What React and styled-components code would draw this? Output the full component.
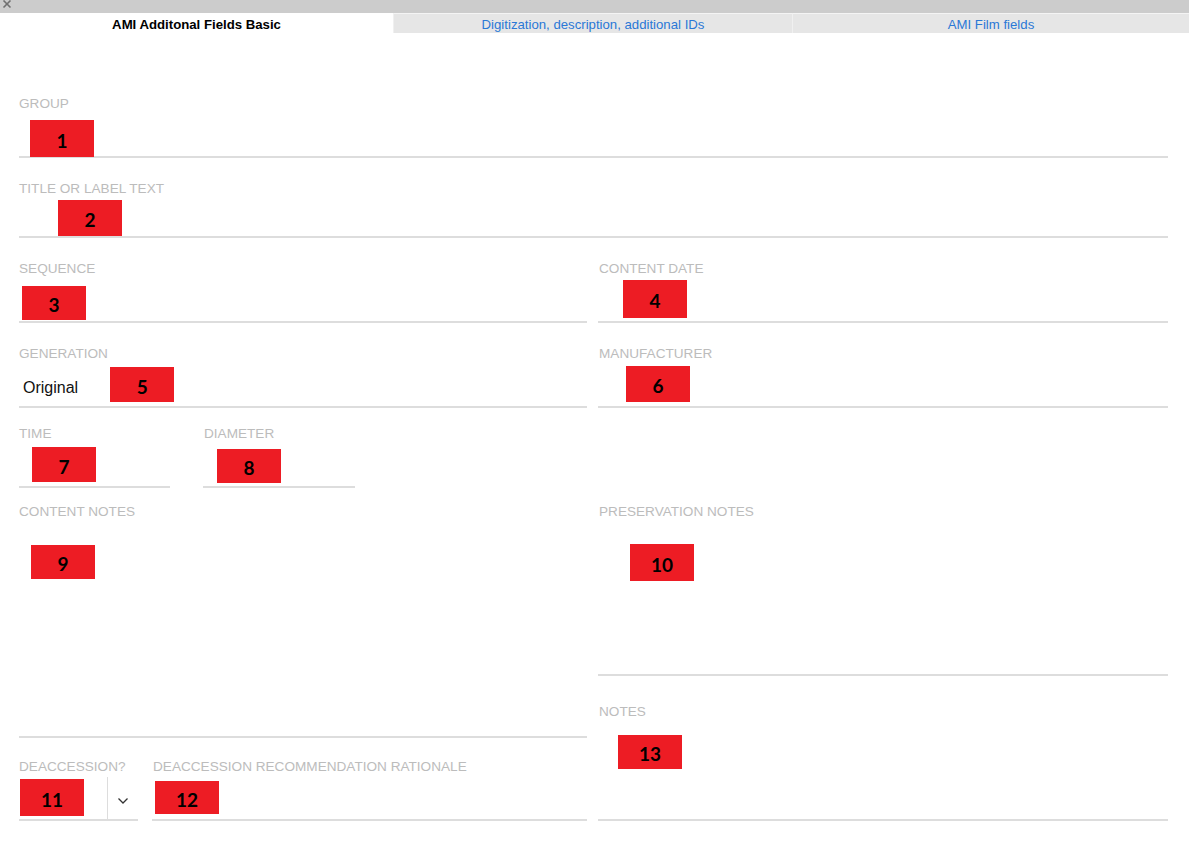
import React from "react";
import styled, { createGlobalStyle } from "styled-components";

const GlobalStyle = createGlobalStyle`
  html, body { margin: 0; padding: 0; background: #fff; }
  body { font-family: "Liberation Sans", Arial, sans-serif; }
`;

const App = () => {
    return (
        <>
            <GlobalStyle />
            <Page>
                <TopBar>
                    <Close aria-label="close">
                        <svg width="10" height="9" viewBox="0 0 10 9">
                            <path
                                d="M1.5 0.5 L8.5 7.5 M8.5 0.5 L1.5 7.5"
                                stroke="#707070"
                                strokeWidth="1.6"
                                fill="none"
                            />
                        </svg>
                    </Close>
                </TopBar>
                <Tabs>
                    <Tab $active $w="393px">AMI Additonal Fields Basic</Tab>
                    <Tab $w="399px">Digitization, description, additional IDs</Tab>
                    <Tab>AMI Film fields</Tab>
                </Tabs>
                <Form>
                    <Row $mt="63px">
                        <Field>
                            <Label>Group</Label>
                            <Box $h="45px">
                                <Badge $x="11px" $y="9px" $h="37px">1</Badge>
                            </Box>
                        </Field>
                    </Row>
                    <Row $mt="23px">
                        <Field>
                            <Label>Title or label text</Label>
                            <Box $h="40px">
                                <Badge $x="39px" $y="4px">2</Badge>
                            </Box>
                        </Field>
                    </Row>
                    <Row $mt="23px" $cols="568px 1fr">
                        <Field>
                            <Label>Sequence</Label>
                            <Box $h="45px">
                                <Badge $x="3px" $y="10px" $h="34px">3</Badge>
                            </Box>
                        </Field>
                        <Field>
                            <Label $indent="1px">Content date</Label>
                            <Box $h="45px">
                                <Badge $x="25px" $y="4px" $h="38px">4</Badge>
                            </Box>
                        </Field>
                    </Row>
                    <Row $mt="23px" $cols="568px 1fr">
                        <Field>
                            <Label>Generation</Label>
                            <Box $h="45px">
                                <Value>Original</Value>
                                <Badge $x="32px" $y="6px" $h="35px">5</Badge>
                            </Box>
                        </Field>
                        <Field>
                            <Label $indent="1px">Manufacturer</Label>
                            <Box $h="45px">
                                <Badge $x="28px" $y="5px">6</Badge>
                            </Box>
                        </Field>
                    </Row>
                    <Row $mt="18px" $cols="151px 152px" $gap="33px">
                        <Field>
                            <Label>Time</Label>
                            <Box $h="45px">
                                <Badge $x="13px" $y="6px" $h="35px">7</Badge>
                            </Box>
                        </Field>
                        <Field>
                            <Label $indent="1px">Diameter</Label>
                            <Box $h="45px">
                                <Badge $x="14px" $y="8px" $h="34px">8</Badge>
                            </Box>
                        </Field>
                    </Row>
                    <Row $mt="16px" $cols="568px 1fr">
                        <Column>
                            <Field>
                                <Label>Content notes</Label>
                                <Box $h="217px">
                                    <Badge $x="12px" $y="26px" $h="34px">9</Badge>
                                </Box>
                            </Field>
                            <Row $mt="21px" $cols="119px 1fr" $gap="14px">
                                <Field>
                                    <Label>Deaccession?</Label>
                                    <Box $h="45px">
                                        <Badge $x="1px" $y="5px" $h="37px">11</Badge>
                                        <SelectButton>
                                            <svg width="12" height="8" viewBox="0 0 12 8">
                                                <polyline
                                                    points="1.5,1.5 6,6 10.5,1.5"
                                                    fill="none"
                                                    stroke="#333"
                                                    strokeWidth="1.3"
                                                />
                                            </svg>
                                        </SelectButton>
                                    </Box>
                                </Field>
                                <Field>
                                    <Label $indent="1px">
                                        Deaccession recommendation rationale
                                    </Label>
                                    <Box $h="45px">
                                        <Badge $x="3px" $y="7px" $h="33px">12</Badge>
                                    </Box>
                                </Field>
                            </Row>
                        </Column>
                        <Column>
                            <Field>
                                <Label $indent="1px">Preservation notes</Label>
                                <Box $h="155px">
                                    <Badge $x="32px" $y="25px" $h="37px">10</Badge>
                                </Box>
                            </Field>
                            <Row $mt="28px">
                                <Field>
                                    <Label $indent="1px">Notes</Label>
                                    <Box $h="100px">
                                        <Badge $x="20px" $y="16px" $h="34px">13</Badge>
                                    </Box>
                                </Field>
                            </Row>
                        </Column>
                    </Row>
                </Form>
            </Page>
        </>
    );
};

const Page = styled.div`
    width: 1189px;
    min-height: 853px;
    background: #fff;
`;

const TopBar = styled.div`
    height: 13px;
    background: #cccccc;
    display: flex;
    align-items: flex-start;
`;

const Close = styled.span`
    display: flex;
    margin-left: 2px;
`;

const Tabs = styled.div`
    display: flex;
    height: 20px;
`;

const Tab = styled.div`
    flex: ${(p) => (p.$w ? `0 0 ${p.$w}` : "1")};
    box-sizing: border-box;
    display: flex;
    align-items: center;
    justify-content: center;
    padding-top: 2px;
    font-size: 13.2px;
    font-weight: ${(p) => (p.$active ? 700 : 400)};
    color: ${(p) => (p.$active ? "#000" : "#2a78d6")};
    background: ${(p) => (p.$active ? "#fff" : "#e6e6e6")};
    border-top: ${(p) => (p.$active ? "none" : "1px solid #f4f4f4")};
    border-left: ${(p) => (p.$active ? "none" : "1px solid #f0f0f0")};
`;

const Form = styled.div`
    padding: 0 21px 0 19px;
`;

const Row = styled.div`
    margin-top: ${(p) => p.$mt || "0"};
    display: grid;
    grid-template-columns: ${(p) => p.$cols || "1fr"};
    column-gap: ${(p) => p.$gap || "11px"};
    align-items: start;
`;

const Column = styled.div`
    display: flex;
    flex-direction: column;
`;

const Field = styled.div`
    display: flex;
    flex-direction: column;
`;

const Label = styled.div`
    height: 15px;
    line-height: 15px;
    padding-left: ${(p) => p.$indent || "0"};
    font-size: 13.6px;
    color: #bcbcbc;
    text-transform: uppercase;
    white-space: nowrap;
`;

const Box = styled.div`
    position: relative;
    height: ${(p) => p.$h};
    display: flex;
    align-items: flex-start;
    border-bottom: 2px solid #dddddd;
`;

const Value = styled.span`
    margin: 18px 0 0 4px;
    font-size: 16px;
    color: #111;
`;

const Badge = styled.div`
    margin-left: ${(p) => p.$x};
    margin-top: ${(p) => p.$y};
    width: 64px;
    height: ${(p) => p.$h || "36px"};
    background: #ed1c24;
    display: flex;
    align-items: center;
    justify-content: center;
    padding-top: 3px;
    box-sizing: border-box;
    font-family: Lato, "Open Sans", sans-serif;
    font-weight: 700;
    font-size: 19px;
    color: #000;
`;

const SelectButton = styled.div`
    margin-left: auto;
    align-self: stretch;
    width: 30px;
    margin-top: 3px;
    border-left: 1px solid #dddddd;
    display: flex;
    align-items: center;
    justify-content: center;
    padding-top: 6px;
`;

export default App;
